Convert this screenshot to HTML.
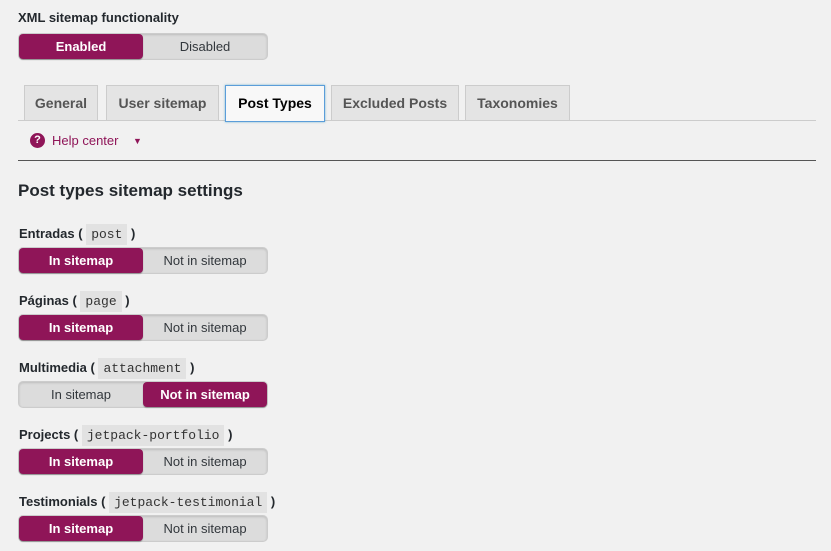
<!DOCTYPE html>
<html><head><style>
body{margin:0;background:#f1f1f1;font-family:"Liberation Sans",sans-serif;color:#23282d;width:831px;height:551px;overflow:hidden;position:relative}
.a{position:absolute}
.lbl{font-size:13px;font-weight:bold;color:#23282d}
.tog{position:absolute;left:18px;width:248px;height:25px;border:1px solid #ccc;border-radius:5px;background:#dcdcdc;box-shadow:inset 0 1px 2px rgba(0,0,0,.15);display:flex;font-size:13px}
.tog div{flex:1;text-align:center;line-height:25px;color:#32373c}
.tog .on{background:#8f1558;color:#fff;border-radius:4px;margin:0;box-shadow:0 1px 1px rgba(0,0,0,.3);font-weight:600}
.tab{position:absolute;top:85px;height:35px;line-height:35px;border:1px solid #ccc;border-bottom:none;background:#e4e4e4;font-size:14px;font-weight:bold;color:#555;text-align:center;box-sizing:border-box}
code{font-family:"Liberation Mono",monospace;font-weight:normal;background:#e2e2e2;padding:3px 5px;font-size:13px;color:#333}
</style></head><body>
<div class="a lbl" style="left:18px;top:10px">XML sitemap functionality</div>
<div class="tog" style="top:33px"><div class="on">Enabled</div><div>Disabled</div></div>
<div class="a" style="left:18px;top:120px;width:798px;border-top:1px solid #ccc"></div>
<div class="tab" style="left:24px;width:74px">General</div>
<div class="tab" style="left:106px;width:113px">User sitemap</div>
<div class="tab" style="left:225px;width:100px;height:37px;background:#f8f8f8;color:#000;border:1px solid #5b9dd9;box-shadow:0 0 2px rgba(30,140,190,.6)">Post Types</div>
<div class="tab" style="left:331px;width:128px">Excluded Posts</div>
<div class="tab" style="left:465px;width:105px">Taxonomies</div>
<div class="a" style="left:30px;top:133px;width:15px;height:15px;border-radius:50%;background:#8f1558;color:#fff;font-size:11px;font-weight:bold;text-align:center;line-height:15px">?</div>
<div class="a" style="left:52px;top:133px;font-size:13px;color:#8f1558">Help center</div>
<div class="a" style="left:133px;top:136px;font-size:9px;color:#8f1558">▼</div>
<div class="a" style="left:18px;top:160px;width:798px;border-top:1px solid #555"></div>
<div class="a" style="left:18px;top:181px;font-size:17px;font-weight:bold">Post types sitemap settings</div>

<div class="a lbl" style="left:19px;top:226px">Entradas ( <code>post</code> )</div>
<div class="tog" style="top:247px"><div class="on">In sitemap</div><div>Not in sitemap</div></div>
<div class="a lbl" style="left:19px;top:293px">Páginas ( <code>page</code> )</div>
<div class="tog" style="top:314px"><div class="on">In sitemap</div><div>Not in sitemap</div></div>
<div class="a lbl" style="left:19px;top:360px">Multimedia ( <code>attachment</code> )</div>
<div class="tog" style="top:381px"><div>In sitemap</div><div class="on">Not in sitemap</div></div>
<div class="a lbl" style="left:19px;top:427px">Projects ( <code>jetpack-portfolio</code> )</div>
<div class="tog" style="top:448px"><div class="on">In sitemap</div><div>Not in sitemap</div></div>
<div class="a lbl" style="left:19px;top:494px">Testimonials ( <code>jetpack-testimonial</code> )</div>
<div class="tog" style="top:515px"><div class="on">In sitemap</div><div>Not in sitemap</div></div>
</body></html>
